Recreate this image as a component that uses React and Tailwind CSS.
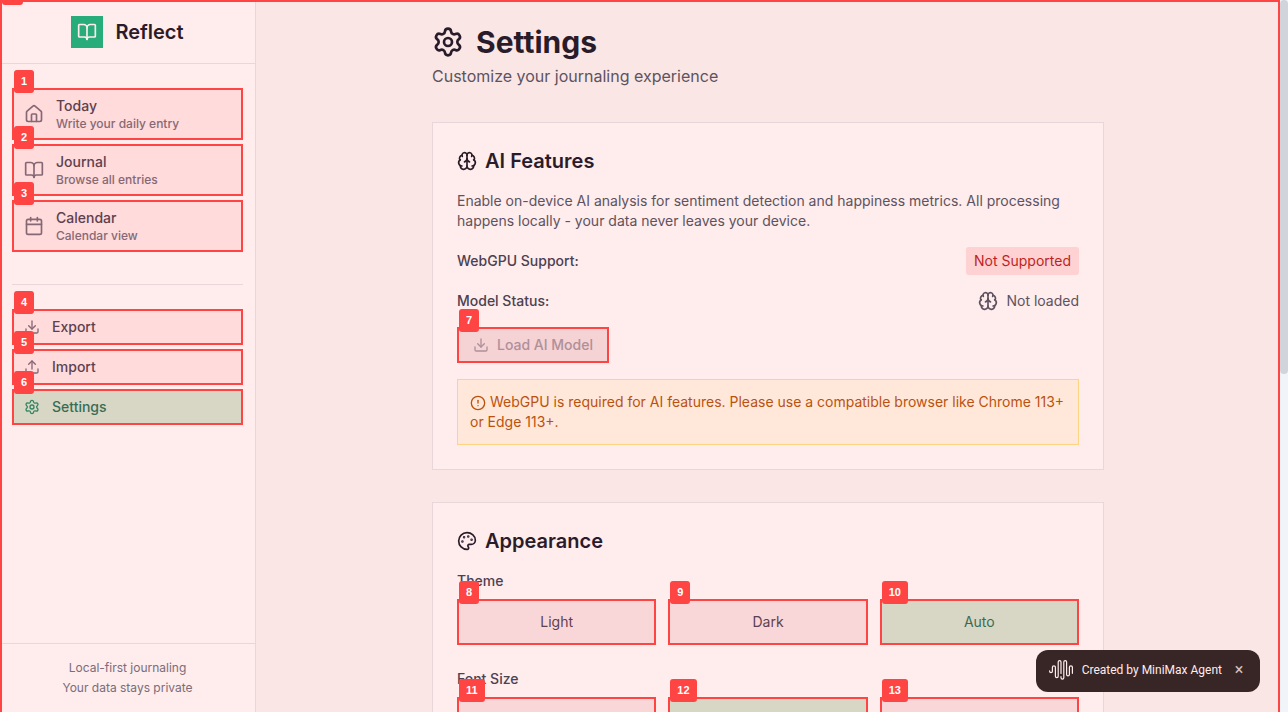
import React from "react";
import {
  BookOpen,
  Brain,
  Calendar,
  CircleAlert,
  Download,
  House,
  Palette,
  Settings,
  Upload,
} from "lucide-react";

function Mark({ n }) {
  return (
    <span
      aria-hidden="true"
      className="pointer-events-none absolute inset-0 z-20 border-2 border-[#ff4444] bg-[#ff4444]/10"
    >
      <span className="absolute -top-5 left-0 rounded-[3px] bg-[#ff4444] px-[7px] py-[5px] font-['Liberation_Sans',Arial,sans-serif] text-[11px] leading-[13px] font-bold text-white">
        {n}
      </span>
    </span>
  );
}

function NavItem({ icon: Icon, title, subtitle, n }) {
  return (
    <a href="#" className="relative flex items-center gap-3 px-3 py-2">
      <Icon className="size-5 shrink-0 text-gray-500" />
      <span className="flex flex-col font-medium">
        <span className="text-sm text-gray-700">{title}</span>
        <span className="text-xs text-gray-500">{subtitle}</span>
      </span>
      <Mark n={n} />
    </a>
  );
}

function ActionItem({ icon: Icon, title, n, active }) {
  return (
    <button
      type="button"
      className={`relative flex w-full items-center gap-3 px-3 py-2 text-sm font-medium ${
        active ? "bg-emerald-100 text-[#047857]" : "text-gray-700"
      }`}
    >
      <Icon className={`size-4 shrink-0 ${active ? "text-[#059669]" : "text-gray-500"}`} />
      {title}
      <Mark n={n} />
    </button>
  );
}

function Sidebar() {
  return (
    <aside className="flex w-64 shrink-0 flex-col border-r border-[#e5e7eb] bg-white">
      <div className="flex h-16 shrink-0 items-center justify-center gap-3 border-b border-[#e5e7eb]">
        <span className="flex size-8 items-center justify-center bg-[#10b981] text-white">
          <BookOpen className="size-5" />
        </span>
        <span className="text-xl font-semibold text-[#111827]">Reflect</span>
      </div>
      <nav className="flex flex-1 flex-col px-3 pt-6">
        <div className="flex flex-col gap-1">
          <NavItem icon={House} title="Today" subtitle="Write your daily entry" n="1" />
          <NavItem icon={BookOpen} title="Journal" subtitle="Browse all entries" n="2" />
          <NavItem icon={Calendar} title="Calendar" subtitle="Calendar view" n="3" />
        </div>
        <div className="mt-8 flex flex-col gap-1 border-t border-[#e5e7eb] pt-6">
          <ActionItem icon={Download} title="Export" n="4" />
          <ActionItem icon={Upload} title="Import" n="5" />
          <ActionItem icon={Settings} title="Settings" n="6" active />
        </div>
      </nav>
      <div className="border-t border-[#e5e7eb] p-4 text-center text-xs text-gray-500">
        <p>Local-first journaling</p>
        <p className="mt-1">Your data stays private</p>
      </div>
    </aside>
  );
}

function Card({ icon: Icon, title, children }) {
  return (
    <section className="border border-[#e5e7eb] bg-white p-6">
      <h2 className="mb-4 flex items-center gap-2 text-xl font-semibold text-[#111827]">
        <Icon className="size-5" />
        {title}
      </h2>
      {children}
    </section>
  );
}

function OptionGroup({ label, options, selected, first }) {
  return (
    <div role="group" aria-label={label}>
      <p className="mb-2 text-sm font-medium text-gray-700">{label}</p>
      <div className="grid grid-cols-3 gap-3">
        {options.map((option, i) => (
          <button
            key={option}
            type="button"
            aria-pressed={option === selected}
            className={`relative px-3 py-[13px] text-sm ${
              option === selected
                ? "bg-emerald-100 text-[#047857]"
                : "bg-gray-50 text-gray-700"
            }`}
          >
            {option}
            <Mark n={first + i} />
          </button>
        ))}
      </div>
    </div>
  );
}

function WaveLogo() {
  return (
    <svg viewBox="0 0 24 20" className="h-5 w-6" fill="none" stroke="#fff" strokeWidth="1.2" strokeLinecap="round">
      <path d="M.6 10.8v.4a1.4 1.4 0 0 0 2.8 0V7.3a1.5 1.5 0 0 1 3 0v8.9a1.4 1.4 0 0 0 2.8 0V2.1a1.4 1.4 0 0 1 2.8 0v11.4" />
      <path d="M12 16.5v1.3a1.4 1.4 0 0 0 2.8 0V2.1a1.4 1.4 0 0 1 2.8 0v12.3a1.4 1.4 0 0 0 2.8 0V7.3a1.5 1.5 0 0 1 3 0v6" />
    </svg>
  );
}

export default function App() {
  return (
    <div className="flex h-screen overflow-hidden bg-[#f1f5f9] font-[Inter,sans-serif] antialiased">
      <div className="relative flex min-w-0 flex-1">
        <Sidebar />
        <main className="min-w-0 flex-1 overflow-hidden bg-[#f9f9f8] px-8 pt-6">
          <div className="mx-auto flex max-w-2xl flex-col gap-8">
            <header className="pb-0.5">
              <h1 className="flex items-center gap-3 text-3xl leading-9 font-bold text-[#111827]">
                <Settings className="size-8" />
                Settings
              </h1>
              <p className="mt-1 text-base text-[#4b5563]">
                Customize your journaling experience
              </p>
            </header>

            <Card icon={Brain} title="AI Features">
              <div className="flex flex-col gap-4 text-sm">
                <p className="text-[#4b5563]">
                  Enable on-device AI analysis for sentiment detection and happiness metrics. All
                  processing happens locally - your data never leaves your device.
                </p>
                <div className="flex items-center justify-between">
                  <span className="font-medium text-gray-700">WebGPU Support:</span>
                  <span className="rounded-[3px] bg-[#fee2e2] px-2 py-1 text-[#b91c1c]">
                    Not Supported
                  </span>
                </div>
                <div className="flex items-center justify-between">
                  <span className="font-medium text-gray-700">Model Status:</span>
                  <span className="flex items-center gap-2 text-[#4b5563]">
                    <Brain className="size-5" />
                    Not loaded
                  </span>
                </div>
                <button
                  type="button"
                  disabled
                  className="relative flex items-center gap-2 self-start bg-gray-100 px-4 py-2 font-medium text-[#9ca3af]"
                >
                  <Download className="size-4" />
                  Load AI Model
                  <Mark n="7" />
                </button>
                <div className="border border-[#fde68a] bg-[#fffbeb] p-3 text-[#b45309]">
                  <CircleAlert className="mr-1 inline size-4" />
                  WebGPU is required for AI features. Please use a compatible browser like Chrome
                  113+ or Edge 113+.
                </div>
              </div>
            </Card>

            <Card icon={Palette} title="Appearance">
              <div className="flex flex-col gap-6">
                <OptionGroup
                  label="Theme"
                  options={["Light", "Dark", "Auto"]}
                  selected="Auto"
                  first={8}
                />
                <OptionGroup
                  label="Font Size"
                  options={["Small", "Medium", "Large"]}
                  selected="Medium"
                  first={11}
                />
              </div>
            </Card>
          </div>
        </main>

        <div className="absolute right-5 bottom-5 flex items-center rounded-xl bg-[#222222] pt-2.5 pr-4 pb-3 pl-[13px] font-[Roboto,sans-serif] text-xs text-white">
          <WaveLogo />
          <span className="ml-[9px]">Created by MiniMax Agent</span>
          <button type="button" aria-label="Close" className="ml-3 w-2.5 text-center text-base leading-4 font-normal text-white/80">
            ×
          </button>
        </div>

        <div
          aria-hidden="true"
          className="pointer-events-none absolute inset-0 z-10 border-2 border-b-0 border-[#ff4444] bg-[#ff4444]/10"
        >
          <span className="absolute -top-5 left-0 rounded-[3px] bg-[#ff4444] px-[7px] py-[5px] text-[11px] leading-[13px] font-bold text-white">
            0
          </span>
        </div>
      </div>
      <div aria-hidden="true" className="w-2 shrink-0">
        <div className="h-[374px] rounded bg-[#d1d5db]" />
      </div>
    </div>
  );
}
